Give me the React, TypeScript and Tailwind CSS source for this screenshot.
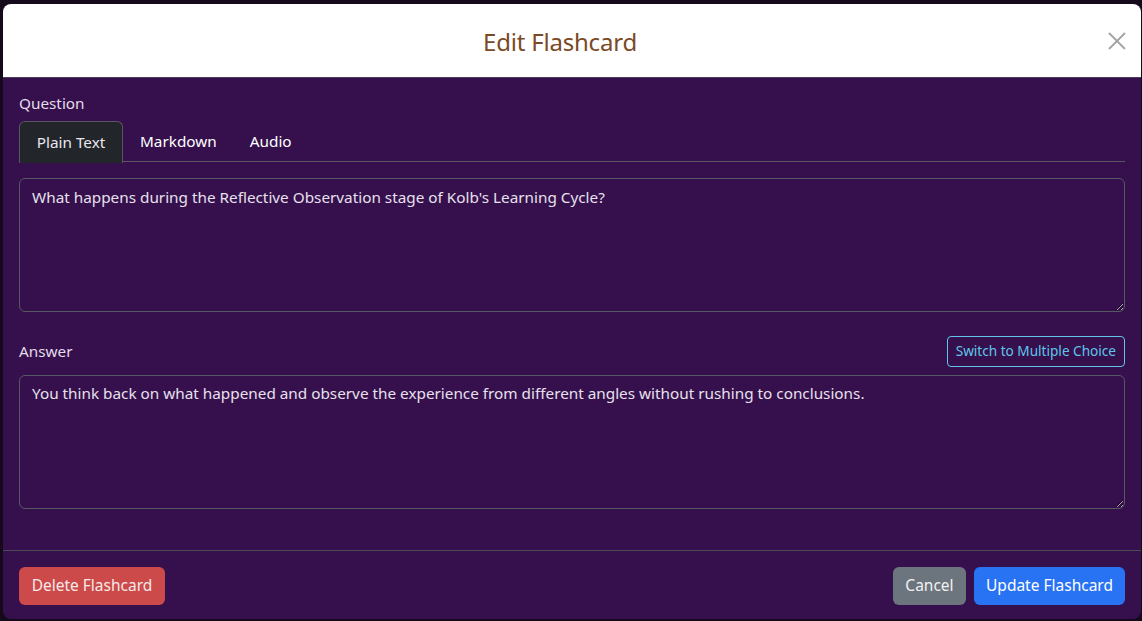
import React from "react";

export default function App() {
  const font = { fontFamily: '"Noto Sans", "Open Sans", sans-serif' };
  return (
    <div
      className="w-[1142px] h-[621px] bg-[#150a1c] pt-[4px] pl-[3px] pr-[1px] pb-[2px] overflow-hidden"
      style={font}
    >
      <div className="h-full rounded-[8px] overflow-hidden bg-[#35104c] flex flex-col">
        <div className="h-[74px] shrink-0 bg-white border-b border-[#4a3d55] flex items-center pl-[16px] pr-[14px]">
          <h5 className="flex-1 text-center text-[24px] leading-none text-[#7a4a26] font-normal tracking-[-0.2px] pr-[6px] pt-[2px]">
            Edit Flashcard
          </h5>
          <button className="w-[20px] h-[20px] flex items-center justify-center">
            <svg width="18" height="18" viewBox="0 0 18 18">
              <path d="M1 1 L17 17 M17 1 L1 17" stroke="#a3a3a3" strokeWidth="1.8" />
            </svg>
          </button>
        </div>

        <div className="flex-1 px-4 pt-[13px] text-[#e4dcea]">
          <div className="text-[15.3px] leading-[24px] mb-[6px]">Question</div>
          <div className="flex h-[41px] border-b border-[#5a5560] text-[15.3px]">
            <div className="h-[42px] px-[16px] w-[104px] flex items-center justify-center bg-[#22252a] border border-b-0 border-[#5a5560] rounded-t-[6px] text-[#eae6ee]">
              Plain Text
            </div>
            <div className="px-[16px] flex items-center text-white ml-[1px]">Markdown</div>
            <div className="px-[16px] flex items-center text-white ml-[1px]">Audio</div>
          </div>
          <textarea
            readOnly
            defaultValue="What happens during the Reflective Observation stage of Kolb's Learning Cycle?"
            className="mt-[16px] block w-full h-[134px] rounded-[6px] border border-[#56595f] bg-[#35104c] px-[12px] py-[6px] text-[15.3px] leading-[24px] text-[#e8e0ec] outline-none"
          />
          <div className="mt-[24px] h-[30px] flex items-center justify-between">
            <span className="text-[15.3px]">Answer</span>
            <button className="h-[31px] px-[8px] rounded-[4px] border border-[#5fc6ea] text-[#5fc6ea] text-[13.6px]">
              Switch to Multiple Choice
            </button>
          </div>
          <textarea
            readOnly
            defaultValue="You think back on what happened and observe the experience from different angles without rushing to conclusions."
            className="mt-[9px] block w-full h-[134px] rounded-[6px] border border-[#56595f] bg-[#35104c] px-[12px] py-[5px] text-[15.3px] leading-[24px] text-[#e8e0ec] outline-none"
          />
        </div>

        <div className="h-[69px] shrink-0 border-t border-[#4d4b55] px-4 pt-[2px] flex items-center justify-between">
          <button className="h-[38px] w-[146px] rounded-[6px] bg-[#cc4a4a] text-[#f6e9e9] text-[15.5px]">
            Delete Flashcard
          </button>
          <div className="flex gap-[8px]">
            <button className="h-[38px] w-[73px] rounded-[6px] bg-[#6c757d] text-[#f1f1f1] text-[15.5px]">
              Cancel
            </button>
            <button className="h-[38px] w-[151px] rounded-[6px] bg-[#2873f3] text-white text-[15.5px]">
              Update Flashcard
            </button>
          </div>
        </div>
      </div>
    </div>
  );
}
